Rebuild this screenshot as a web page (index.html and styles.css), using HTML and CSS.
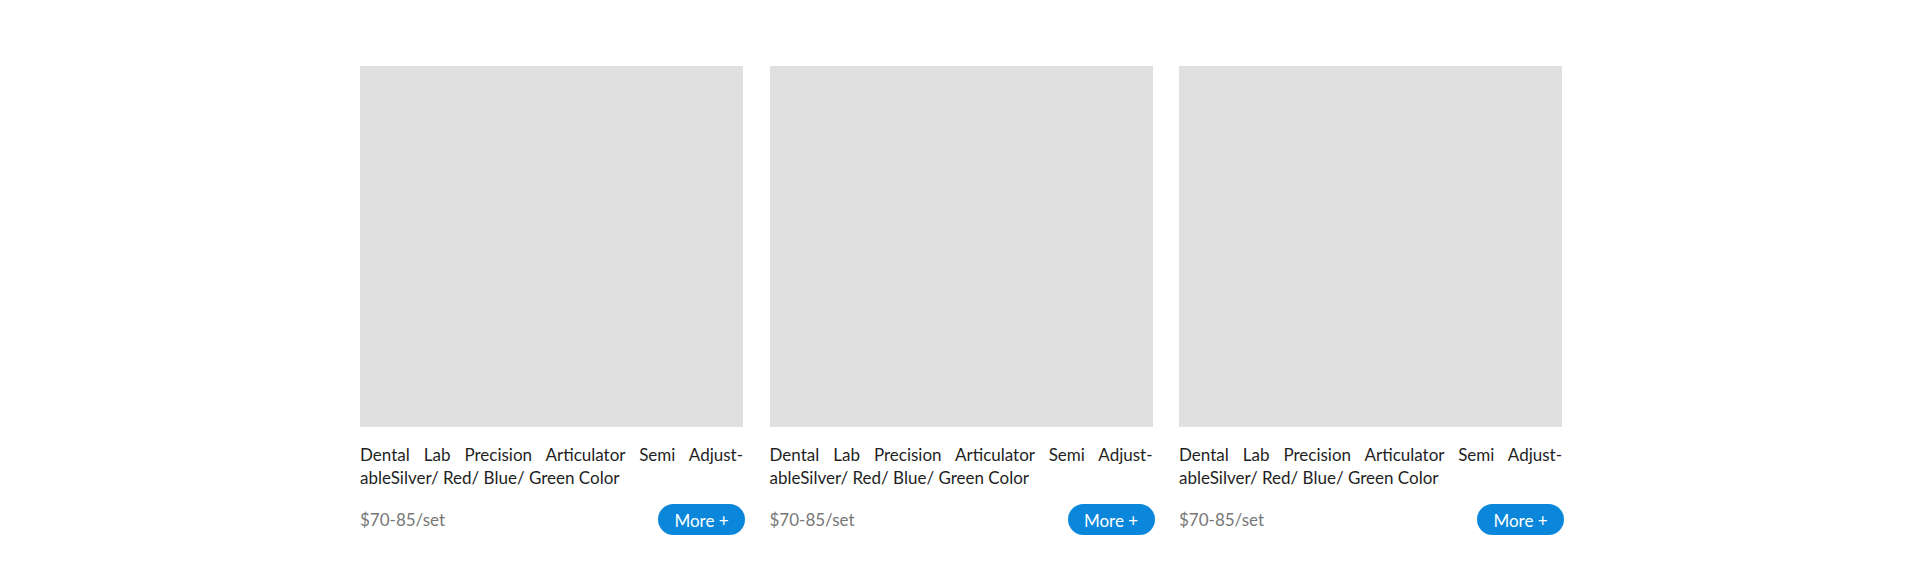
FILE: index.html
```html
<!DOCTYPE html>
<html lang="en">
<head>
<meta charset="utf-8">
<title>Products</title>
<link rel="stylesheet" href="styles.css">
</head>
<body>
<div class="list">
  <div class="card">
    <div class="pic"></div>
    <p class="title">Dental Lab Precision Articulator Semi Adjust&shy;ableSilver/ Red/ Blue/ Green Color</p>
    <div class="row">
      <span class="price">$70-85/set</span>
      <a class="more" href="#">More +</a>
    </div>
  </div>
  <div class="card">
    <div class="pic"></div>
    <p class="title">Dental Lab Precision Articulator Semi Adjust&shy;ableSilver/ Red/ Blue/ Green Color</p>
    <div class="row">
      <span class="price">$70-85/set</span>
      <a class="more" href="#">More +</a>
    </div>
  </div>
  <div class="card">
    <div class="pic"></div>
    <p class="title">Dental Lab Precision Articulator Semi Adjust&shy;ableSilver/ Red/ Blue/ Green Color</p>
    <div class="row">
      <span class="price">$70-85/set</span>
      <a class="more" href="#">More +</a>
    </div>
  </div>
</div>
</body>
</html>
```
FILE: styles.css
```css
html, body {
  margin: 0;
  padding: 0;
  background: #ffffff;
}
body {
  font-family: Lato, "Noto Sans", "Liberation Sans", sans-serif;
  color: #222222;
}
.list {
  width: 1202px;
  margin: 66px 0 0 calc(50% - 600px);
  display: grid;
  grid-template-columns: repeat(3, 383px);
  column-gap: 26.5px;
}
.card {
  display: flex;
  flex-direction: column;
}
.pic {
  height: 361px;
  background: #e0e0e0;
}
.title {
  margin: 16px 0 0;
  font-size: 17px;
  line-height: 23px;
  text-align: justify;
  color: #1f1f1f;
}
.row {
  margin-top: 15px;
  display: flex;
  justify-content: space-between;
  align-items: center;
}
.price {
  font-size: 17px;
  color: #777777;
}
.more {
  margin-right: -2px;
  width: 87px;
  height: 31px;
  border-radius: 16px;
  background: #0a87db;
  color: #ffffff;
  text-decoration: none;
  font-size: 17px;
  display: flex;
  align-items: center;
  justify-content: center;
  padding-top: 2px;
  box-sizing: border-box;
}
```
